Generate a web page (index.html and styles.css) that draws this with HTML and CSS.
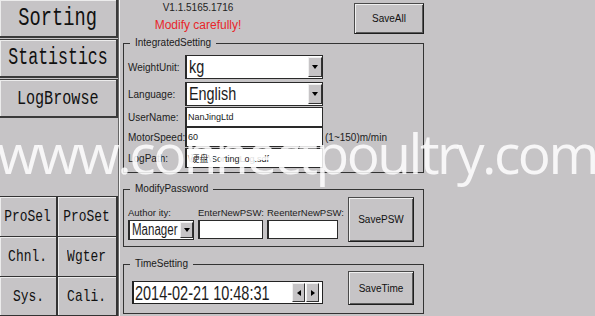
FILE: index.html
```html
<!DOCTYPE html>
<html lang="en">
<head>
    <meta charset="UTF-8">
    <title>System Setting</title>
    <link rel="stylesheet" href="styles.css">
</head>
<body>
    <div class="screen">
        <div class="nav">
            <div class="nav-main">
                <div class="nav-btn sorting"><span>Sorting</span></div>
                <div class="nav-btn statistics"><span>Statistics</span></div>
                <div class="nav-btn logbrowse"><span>LogBrowse</span></div>
            </div>
            <div class="nav-grid">
                <div class="cell"><span>ProSel</span></div>
                <div class="cell"><span>ProSet</span></div>
                <div class="cell"><span>Chnl.</span></div>
                <div class="cell"><span>Wgter</span></div>
                <div class="cell"><span>Sys.</span></div>
                <div class="cell"><span>Cali.</span></div>
            </div>
        </div>

        <div class="panel">
            <div class="content">
                <div class="head">
                    <div class="info">
                        <div class="ver">V1.1.5165.1716</div>
                        <div class="warn">Modify carefully!</div>
                    </div>
                    <div class="btn save-all">SaveAll</div>
                </div>

                <fieldset class="group integrated">
                    <legend>IntegratedSetting</legend>
                    <div class="row r24">
                        <span class="lbl">WeightUnit:</span>
                        <div class="combo">
                            <div class="val"><span>kg</span></div>
                            <div class="drop"></div>
                        </div>
                    </div>
                    <div class="row r24 gap3">
                        <span class="lbl">Language:</span>
                        <div class="combo">
                            <div class="val"><span>English</span></div>
                            <div class="drop"></div>
                        </div>
                    </div>
                    <div class="row r20 gap1">
                        <span class="lbl">UserName:</span>
                        <div class="field">NanJingLtd</div>
                    </div>
                    <div class="row r20">
                        <span class="lbl">MotorSpeed:</span>
                        <div class="field">60</div>
                        <span class="unit">(1~150)m/min</span>
                    </div>
                    <div class="row r20 gap1">
                        <span class="lbl">LogPath:</span>
                        <div class="field">\硬盘\SortingLog.sdf</div>
                    </div>
                </fieldset>

                <fieldset class="group pw">
                    <legend>ModifyPassword</legend>
                    <div class="pw-inner">
                        <div class="col c1">
                            <div class="col-lbl">Author ity:</div>
                            <div class="combo small">
                                <div class="val"><span>Manager</span></div>
                                <div class="drop"></div>
                            </div>
                        </div>
                        <div class="col c2">
                            <div class="col-lbl">EnterNewPSW:</div>
                            <div class="field small"></div>
                        </div>
                        <div class="col c3">
                            <div class="col-lbl">ReenterNewPSW:</div>
                            <div class="field small"></div>
                        </div>
                        <div class="btn save-psw">SavePSW</div>
                    </div>
                </fieldset>

                <fieldset class="group time">
                    <legend>TimeSetting</legend>
                    <div class="time-inner">
                        <div class="date">
                            <div class="val"><span>2014-02-21 10:48:31</span></div>
                            <div class="spin left"></div>
                            <div class="spin right"></div>
                        </div>
                        <div class="btn save-time">SaveTime</div>
                    </div>
                </fieldset>
            </div>
        </div>
    </div>

    <div class="watermark">www.connectpoultry.com</div>
</body>
</html>
```

FILE: styles.css
```css
* {
    box-sizing: border-box;
}
body {
    margin: 0;
    width: 595px;
    height: 316px;
    overflow: hidden;
    position: relative;
    background: #c6c4c6;
    font-family: "Liberation Sans", Arial, "Noto Sans CJK SC", sans-serif;
    color: #1c1c1c;
}
.screen {
    display: flex;
    height: 316px;
}

/* left navigation */
.nav {
    width: 118px;
    display: flex;
    flex-direction: column;
}
.nav-main {
    display: flex;
    flex-direction: column;
    gap: 1px;
}
.nav-btn {
    display: flex;
    align-items: center;
    justify-content: center;
    font-family: "Liberation Mono", "Courier New", monospace;
    color: #111;
    border: 1px solid #3a3a3a;
    border-left: none;
    border-right-width: 2px;
    border-bottom-width: 2px;
    box-shadow: inset 1px 1px 0 #ececec;
}
.nav-btn span,
.cell span {
    display: inline-block;
    transform: scaleX(.72);
    white-space: nowrap;
}
.sorting {
    height: 38px;
    font-size: 26px;
    border-top: none;
}
.statistics {
    height: 39px;
    font-size: 23px;
}
.logbrowse {
    height: 39px;
    font-size: 21px;
}
.nav-grid {
    margin-top: auto;
    display: grid;
    grid-template-columns: 58px 60px;
    grid-template-rows: 40px 40px 39px;
    border-top: 1px solid #333;
}
.cell {
    display: flex;
    align-items: center;
    justify-content: center;
    font-family: "Liberation Mono", "Courier New", monospace;
    font-size: 17px;
    color: #111;
    border-right: 2px solid #333;
    border-bottom: 1px solid #333;
    box-shadow: inset 1px 1px 0 #ececec;
}
.cell span {
    transform: scaleX(.76);
}

/* right panel */
.panel {
    flex: 1;
    border-left: 1px solid #666;
    box-shadow: inset 1px 0 0 #f4f4f4;
    padding-left: 4px;
}
.content {
    width: 301px;
}
.head {
    display: flex;
    height: 37px;
}
.info {
    width: 150px;
    text-align: center;
}
.ver {
    font-size: 10px;
    line-height: 12px;
    padding-top: 2px;
    color: #222;
}
.warn {
    font-size: 12px;
    line-height: 14px;
    margin-top: 4px;
    color: #e8262a;
}
.btn {
    display: flex;
    align-items: center;
    justify-content: center;
    background: #c6c4c6;
    border: 1px solid #4a4a4a;
    border-right-color: #1e1e1e;
    border-bottom-color: #1e1e1e;
    box-shadow: inset 1px 1px 0 #f0f0f0, inset -1px -1px 0 #5a5a5a;
    font-size: 10px;
    color: #111;
}
.save-all {
    margin-left: auto;
    margin-top: 3px;
    width: 70px;
    height: 31px;
}

/* group boxes */
.group {
    margin: 0;
    min-width: 0;
    border: 1px solid #333;
    padding: 0 4px 4px;
}
.group legend {
    margin-left: 2px;
    padding: 0 5px;
    font-size: 10px;
    line-height: 12px;
    color: #1a1a1a;
}
.integrated {
    padding-top: 6px;
    padding-bottom: 4px;
}
.row {
    display: flex;
    align-items: center;
}
.r24 {
    height: 24px;
}
.r20 {
    height: 20px;
}
.gap1 {
    margin-top: 1px;
}
.gap3 {
    margin-top: 3px;
}
.lbl {
    width: 57px;
    font-size: 10px;
    white-space: nowrap;
}
.unit {
    margin-left: 2px;
    font-size: 10px;
    white-space: nowrap;
}
.combo {
    width: 138px;
    height: 100%;
    display: flex;
    align-items: stretch;
    background: #fff;
    border: 1px solid #2a2a2a;
    border-left-width: 2px;
    padding: 1px 0 1px 2px;
}
.val {
    flex: 1;
    min-width: 0;
    display: flex;
    align-items: center;
    white-space: nowrap;
}
.val span {
    display: inline-block;
    transform-origin: left center;
}
.combo .val span {
    font-size: 18px;
    transform: scaleX(.8);
}
.drop,
.spin {
    width: 14px;
    display: flex;
    align-items: center;
    justify-content: center;
    background: #c6c4c6;
    border: 1px solid;
    border-color: #f0f0f0 #333 #333 #f0f0f0;
}
.drop::after {
    content: "";
    border-left: 3.5px solid transparent;
    border-right: 3.5px solid transparent;
    border-top: 4px solid #000;
}
.field {
    width: 138px;
    height: 100%;
    display: flex;
    align-items: center;
    background: #fff;
    border: 1px solid #2a2a2a;
    border-left-width: 2px;
    padding-left: 1px;
    font-size: 9px;
    white-space: nowrap;
    overflow: hidden;
}

/* password */
.pw {
    margin-top: 10px;
    padding: 2px 8px 4px 4px;
}
.pw-inner {
    display: flex;
    align-items: flex-start;
}
.col {
    padding-top: 10px;
    margin-right: 4px;
}
.c1 {
    width: 66px;
}
.c2 {
    width: 65px;
}
.c3 {
    width: 71px;
    margin-right: 0;
}
.col-lbl {
    font-size: 9.5px;
    line-height: 12px;
    white-space: nowrap;
}
.combo.small {
    width: 66px;
    height: 20px;
    margin-top: 1px;
}
.combo.small .val span {
    font-size: 16px;
    transform: scaleX(.72);
}
.combo.small .drop {
    width: 13px;
}
.field.small {
    width: 100%;
    height: 19px;
    margin-top: 1px;
}
.save-psw {
    margin-left: 10px;
    width: 66px;
    height: 45px;
}

/* time */
.time {
    margin-top: 11px;
    padding: 0 4px 8px;
}
.time-inner {
    display: flex;
    align-items: flex-start;
}
.date {
    margin-top: 11px;
    margin-left: 4px;
    width: 191px;
    height: 23px;
    display: flex;
    background: #fff;
    border: 1px solid #222;
    border-left-width: 2px;
    padding: 1px 3px 1px 1px;
}
.date .val span {
    font-size: 21px;
    transform: scaleX(.69);
}
.spin {
    width: 13px;
}
.spin.left::after {
    content: "";
    border-top: 3.5px solid transparent;
    border-bottom: 3.5px solid transparent;
    border-right: 4px solid #000;
}
.spin.right {
    margin-left: 1px;
}
.spin.right::after {
    content: "";
    border-top: 3.5px solid transparent;
    border-bottom: 3.5px solid transparent;
    border-left: 4px solid #000;
}
.save-time {
    margin-top: 1px;
    margin-left: 25px;
    width: 66px;
    height: 34px;
}

/* overlay text */
.watermark {
    position: absolute;
    left: -3px;
    top: 123px;
    font-family: "Open Sans", sans-serif;
    font-size: 55px;
    line-height: 60px;
    font-weight: 400;
    letter-spacing: -2.5px;
    color: rgba(255, 255, 255, .85);
    white-space: nowrap;
    pointer-events: none;
}
```
